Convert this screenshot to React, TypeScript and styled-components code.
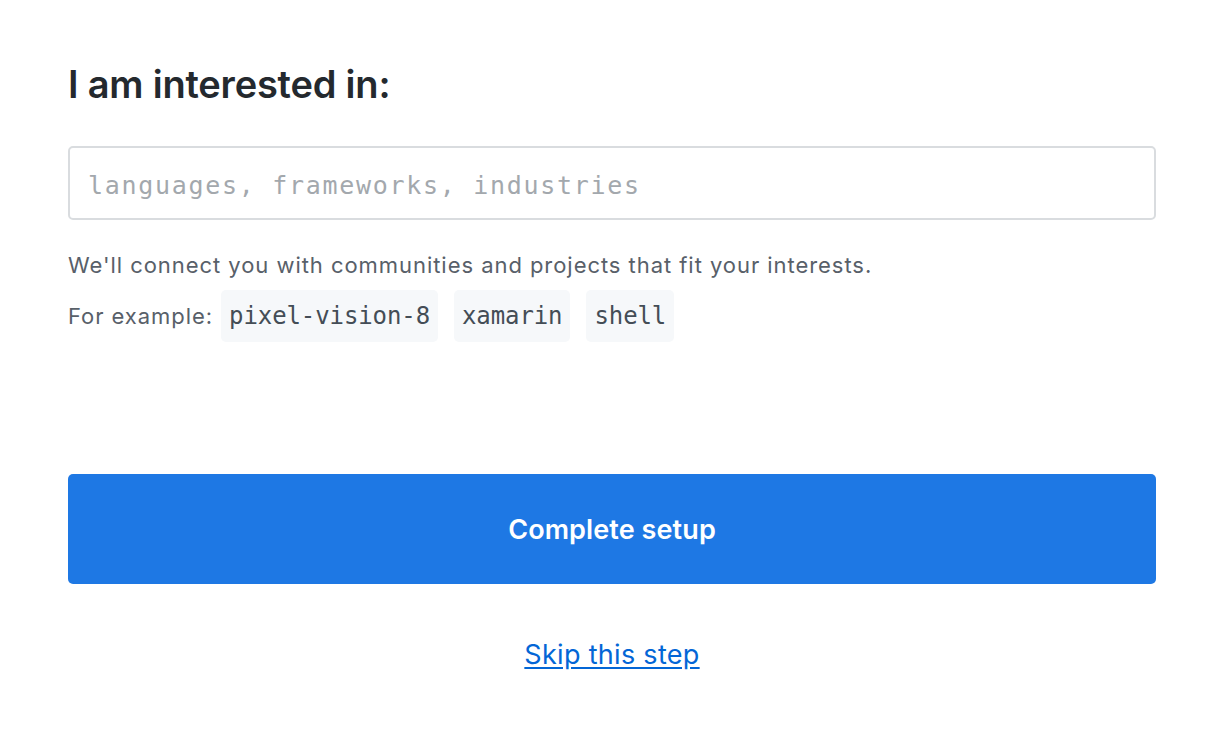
import React from 'react'
import styled, { createGlobalStyle } from 'styled-components'

const GlobalStyle = createGlobalStyle`
  body {
    margin: 0;
    background: #ffffff;
    font-family: Inter, "Liberation Sans", sans-serif;
  }
`

const Page = styled.div`
  width: 1088px;
  margin-left: 68px;
  padding-top: 62px;
  display: flex;
  flex-direction: column;
`

const Heading = styled.h2`
  margin: 0;
  font-size: 38px;
  line-height: 44px;
  font-weight: 600;
  color: #24292e;
  letter-spacing: -0.2px;
`

const TopicInput = styled.input`
  margin-top: 40px;
  box-sizing: border-box;
  width: 100%;
  height: 74px;
  padding: 4px 18px 0;
  border: 2px solid #d9dcdf;
  border-radius: 5px;
  font-family: "DejaVu Sans Mono", monospace;
  font-size: 25px;
  letter-spacing: 1.7px;
  color: #24292e;
  outline: none;

  &::placeholder {
    color: #a3a8ad;
  }
`

const Note = styled.p`
  margin: 30px 0 0;
  font-size: 22px;
  line-height: 30px;
  letter-spacing: 0.95px;
  color: #586069;
`

const Examples = styled.div`
  margin-top: 10px;
  display: flex;
  align-items: center;
  gap: 16px;
  font-size: 22px;
  letter-spacing: 0.95px;
  color: #586069;
`

const Label = styled.span`
  margin-right: -8px;
`

const Chip = styled.span`
  height: 52px;
  display: flex;
  align-items: center;
  padding: 0 8px;
  background: #f6f8fa;
  border-radius: 5px;
  font-family: "DejaVu Sans Mono", monospace;
  font-size: 24px;
  letter-spacing: -0.1px;
  color: #444d56;
`

const SubmitButton = styled.button`
  margin-top: 132px;
  height: 110px;
  width: 100%;
  border: none;
  border-radius: 5px;
  background: #1e78e4;
  color: #ffffff;
  font-family: Inter, "Liberation Sans", sans-serif;
  font-size: 27px;
  letter-spacing: 0.1px;
  font-weight: 600;
  cursor: pointer;
`

const SkipLink = styled.a`
  margin-top: 50px;
  align-self: center;
  font-size: 27px;
  line-height: 42px;
  letter-spacing: 0.3px;
  color: #0366d6;
  text-decoration: underline;
  text-underline-offset: 3px;
`

const examples = ['pixel-vision-8', 'xamarin', 'shell']

const App: React.FC = () => {
  return (
    <>
      <GlobalStyle />
      <Page>
        <Heading>I am interested in:</Heading>
        <TopicInput placeholder="languages, frameworks, industries" />
        <Note>We'll connect you with communities and projects that fit your interests.</Note>
        <Examples>
          <Label>For example:</Label>
          {examples.map((e) => (
            <Chip key={e}>{e}</Chip>
          ))}
        </Examples>
        <SubmitButton>Complete setup</SubmitButton>
        <SkipLink href="#">Skip this step</SkipLink>
      </Page>
    </>
  )
}

export default App
